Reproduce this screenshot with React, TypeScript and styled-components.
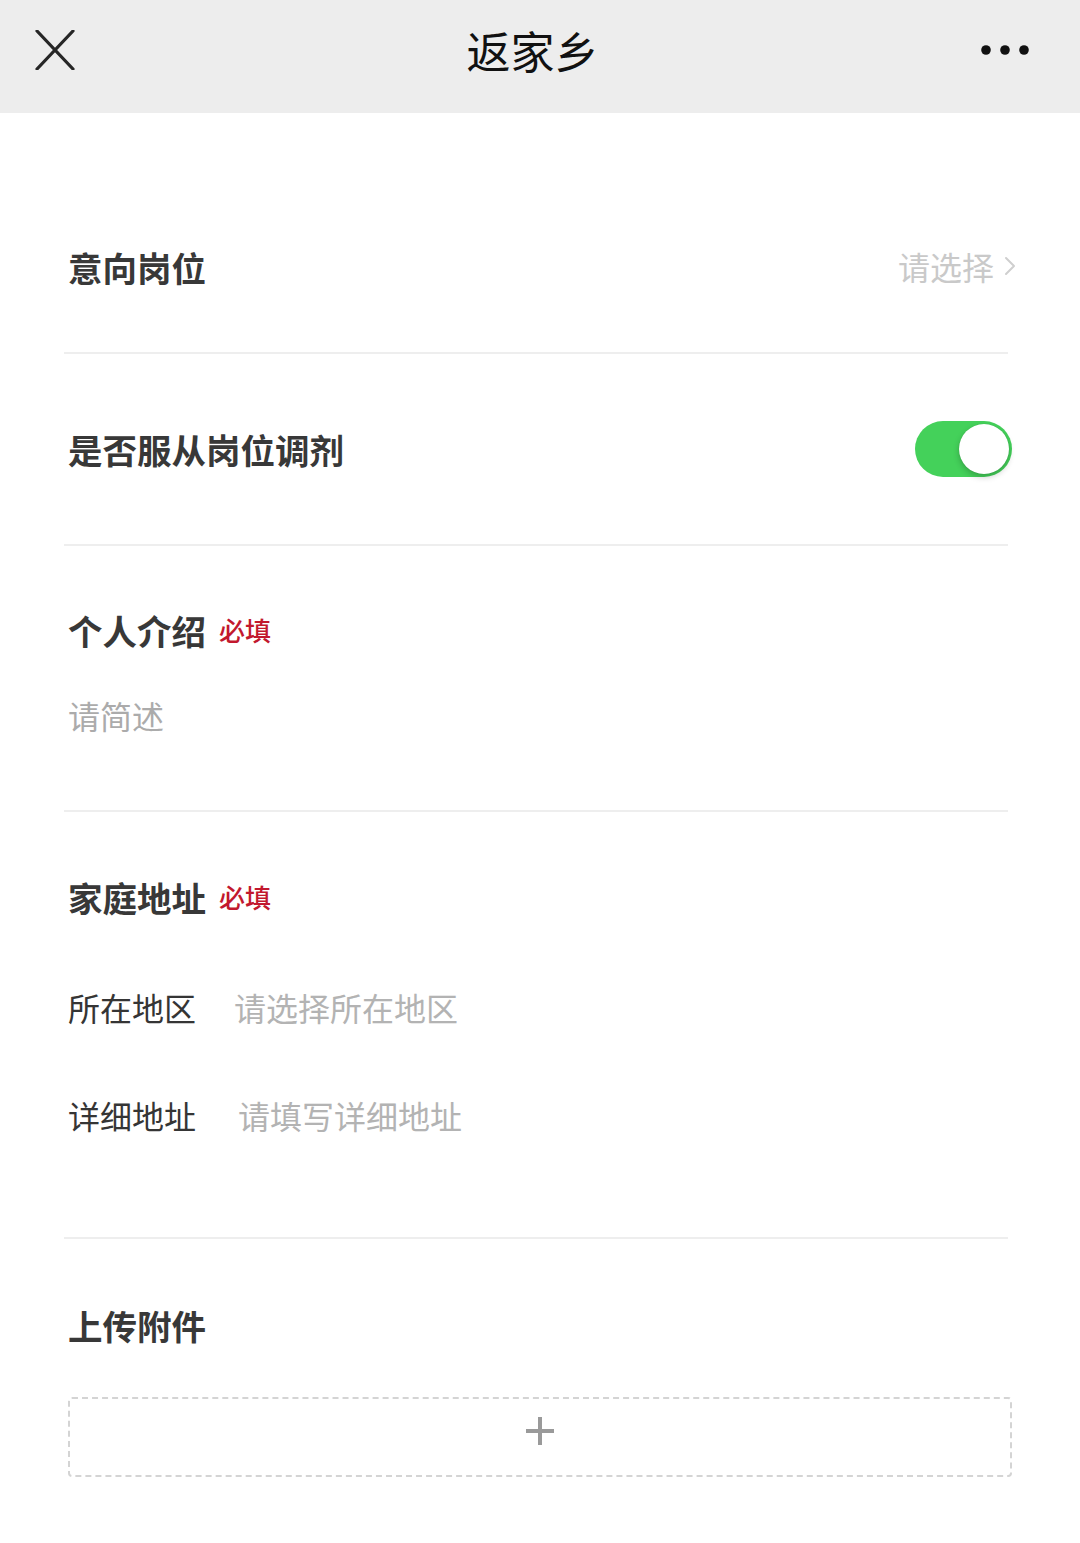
import React from "react";
import styled, { createGlobalStyle } from "styled-components";

const GlobalStyle = createGlobalStyle`
  html, body { margin: 0; padding: 0; background: #ffffff; }
  body { font-family: "Noto Sans CJK SC", "Noto Sans", sans-serif; }
  * { box-sizing: border-box; }
`;

const Page = styled.div`
  width: 1080px;
  min-height: 1543px;
  background: #ffffff;
  display: flex;
  flex-direction: column;
`;

const NavBar = styled.header`
  height: 113px;
  background: #ededed;
  display: grid;
  grid-template-columns: 140px 1fr 140px;
  align-items: center;
  padding: 0 50px 14px 35px;
`;

const NavButton = styled.button<{ $align: "start" | "end" }>`
  border: none;
  background: none;
  padding: 0;
  display: flex;
  justify-content: ${(p) => (p.$align === "start" ? "flex-start" : "flex-end")};
  align-items: center;
  cursor: pointer;
  height: 60px;
`;

const Title = styled.h1`
  margin: 0;
  text-align: center;
  font-size: 44px;
  font-weight: 400;
  color: #111111;
  line-height: 60px;
`;

const Form = styled.main`
  display: flex;
  flex-direction: column;
  padding: 0 72px 0 64px;
`;

const Section = styled.section<{ $pt: number; $pb: number }>`
  display: flex;
  flex-direction: column;
  padding-top: ${(p) => p.$pt}px;
  padding-bottom: ${(p) => p.$pb}px;
  padding-left: 4px;
  border-bottom: 2px solid #eeeeee;
`;

const PlainSection = styled.section<{ $pt: number }>`
  display: flex;
  flex-direction: column;
  padding-top: ${(p) => p.$pt}px;
  padding-left: 4px;
`;

const Row = styled.div<{ $h: number }>`
  height: ${(p) => p.$h}px;
  display: flex;
  align-items: center;
  justify-content: space-between;
`;

const Label = styled.div`
  font-size: 34.5px;
  font-weight: 700;
  color: #383838;
  line-height: 50px;
  display: flex;
  align-items: center;
`;

const Required = styled.span`
  font-size: 26px;
  font-weight: 500;
  color: #c2182e;
  margin-left: 13px;
  line-height: 50px;
`;

const SelectValue = styled.div`
  display: flex;
  align-items: center;
  gap: 10px;
  font-size: 32px;
  color: #c9c9c9;
  line-height: 50px;
  margin-right: -8px;
  margin-top: -3px;
`;

const Placeholder = styled.div<{ $mt: number }>`
  margin-top: ${(p) => p.$mt}px;
  font-size: 32px;
  color: #ababab;
  line-height: 50px;
`;

const FieldRow = styled.div<{ $mt: number; $gap: number }>`
  margin-top: ${(p) => p.$mt}px;
  display: flex;
  align-items: center;
  gap: ${(p) => p.$gap}px;
  line-height: 50px;
`;

const FieldLabel = styled.span`
  font-size: 32px;
  color: #353535;
  font-weight: 400;
`;

const FieldPlaceholder = styled.span`
  font-size: 32px;
  color: #b3b3b3;
`;

const Switch = styled.div`
  width: 97px;
  height: 56px;
  border-radius: 28px;
  background: #44d15a;
  display: flex;
  align-items: center;
  justify-content: flex-end;
  padding: 3px;
  margin-right: -4px;
`;

const Knob = styled.div`
  width: 50px;
  height: 50px;
  border-radius: 50%;
  background: #ffffff;
  box-shadow: 0 3px 6px rgba(0, 0, 0, 0.22), 0 0 1px rgba(0, 0, 0, 0.15);
`;

const UploadBox = styled.button`
  margin-top: 47px;
  width: 944px;
  height: 80px;
  border: 2px dashed #d4d4d4;
  border-radius: 4px;
  background: #ffffff;
  display: flex;
  align-items: center;
  justify-content: center;
  cursor: pointer;
  padding: 0 0 12px;
`;

function CloseIcon() {
  return (
    <svg width="40" height="40" viewBox="0 0 40 40">
      <path d="M2 1 L38 39 M38 1 L2 39" stroke="#262626" strokeWidth="3.2" strokeLinecap="round" fill="none" />
    </svg>
  );
}

function MoreIcon() {
  return (
    <svg width="50" height="12" viewBox="0 0 50 12">
      <circle cx="6" cy="6" r="4.8" fill="#111" />
      <circle cx="25" cy="6" r="4.8" fill="#111" />
      <circle cx="44" cy="6" r="4.8" fill="#111" />
    </svg>
  );
}

function Chevron() {
  return (
    <svg width="12" height="20" viewBox="0 0 12 20">
      <path d="M2 2 L10 10 L2 18" stroke="#cfcfcf" strokeWidth="2" fill="none" strokeLinecap="round" strokeLinejoin="round" />
    </svg>
  );
}

function PlusIcon() {
  return (
    <svg width="30" height="30" viewBox="0 0 30 30">
      <path d="M15 1 V29 M1 15 H29" stroke="#9a9a9a" strokeWidth="4" fill="none" />
    </svg>
  );
}

export default function App() {
  return (
    <Page>
      <GlobalStyle />
      <NavBar>
        <NavButton $align="start" aria-label="关闭">
          <CloseIcon />
        </NavButton>
        <Title>返家乡</Title>
        <NavButton $align="end" aria-label="更多">
          <MoreIcon />
        </NavButton>
      </NavBar>
      <Form>
        <Section $pt={69} $pb={0}>
          <Row $h={170}>
            <Label>意向岗位</Label>
            <SelectValue>
              请选择
              <Chevron />
            </SelectValue>
          </Row>
        </Section>
        <Section $pt={0} $pb={0}>
          <Row $h={190}>
            <Label>是否服从岗位调剂</Label>
            <Switch>
              <Knob />
            </Switch>
          </Row>
        </Section>
        <Section $pt={59} $pb={70}>
          <Label>
            个人介绍<Required>必填</Required>
          </Label>
          <Placeholder $mt={35}>请简述</Placeholder>
        </Section>
        <Section $pt={60} $pb={97}>
          <Label>
            家庭地址<Required>必填</Required>
          </Label>
          <FieldRow $mt={60} $gap={38}>
            <FieldLabel>所在地区</FieldLabel>
            <FieldPlaceholder>请选择所在地区</FieldPlaceholder>
          </FieldRow>
          <FieldRow $mt={58} $gap={42}>
            <FieldLabel>详细地址</FieldLabel>
            <FieldPlaceholder>请填写详细地址</FieldPlaceholder>
          </FieldRow>
        </Section>
        <PlainSection $pt={61}>
          <Label>上传附件</Label>
          <UploadBox aria-label="上传">
            <PlusIcon />
          </UploadBox>
        </PlainSection>
      </Form>
    </Page>
  );
}
